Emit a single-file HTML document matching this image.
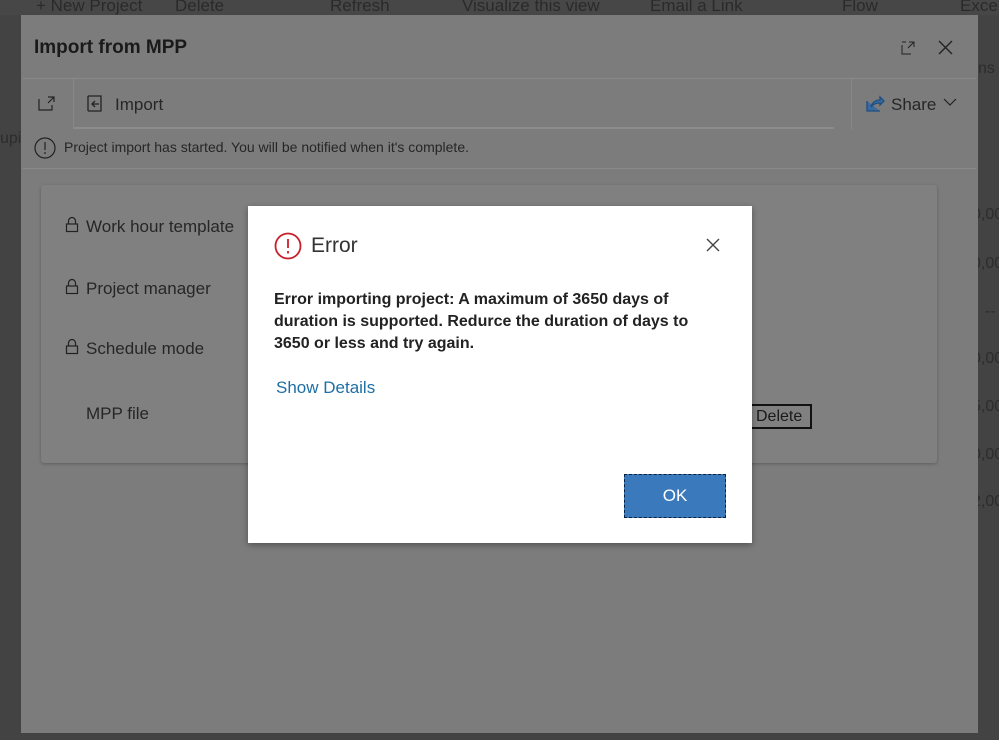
<!DOCTYPE html>
<html style="background:#434343"><head><meta charset="utf-8"><style>
*{margin:0;padding:0;box-sizing:border-box}
body{width:999px;height:740px;overflow:hidden;background:#434343;font-family:"Liberation Sans",sans-serif;position:relative;color:#1e1e1e}
.a{position:absolute}
.top{left:0;top:0;width:999px;height:15px;background:#474747;overflow:hidden}
.top span{position:absolute;top:-4px;font-size:17px;color:#2a2a2a}
.panel{left:21px;top:15px;width:957px;height:718px;background:#7c7c7c}
.t{font-size:19px;font-weight:bold;color:#1a1a1a}
.lbl{font-size:17px;color:#262626}
.num{font-size:16px;color:#2c2c2c;left:972px}
</style></head><body>
<div class="a top">
<span style="left:36px">+ New Project</span><span style="left:175px">Delete</span><span style="left:330px">Refresh</span><span style="left:462px">Visualize this view</span><span style="left:650px">Email a Link</span><span style="left:842px">Flow</span><span style="left:960px">Excel</span>
</div>
<div class="a" style="left:978px;top:60px;font-size:16px;color:#2c2c2c">ns</div>
<div class="a num" style="top:206px">0,00</div>
<div class="a num" style="top:255px">0,00</div>
<div class="a num" style="top:303px;left:985px">--</div>
<div class="a num" style="top:350px">0,00</div>
<div class="a num" style="top:398px">5,00</div>
<div class="a num" style="top:446px">0,00</div>
<div class="a num" style="top:493px">2,00</div>
<div class="a" style="left:0;top:130px;font-size:16px;color:#2c2c2c">upi</div>

<div class="a panel"></div>
<div class="a t" style="left:34px;top:37px">Import from MPP</div>
<svg class="a" style="left:900px;top:40px" width="16" height="16" viewBox="0 0 16 16" fill="none" stroke="#222" stroke-width="1"><path d="M2 5V14H11M9 2H14V7M14 2L8 8M2 2h4"/></svg>
<svg class="a" style="left:938px;top:40px" width="15" height="15" viewBox="0 0 15 15" stroke="#222" stroke-width="1.4"><path d="M1 1L14 14M14 1L1 14"/></svg>
<div class="a" style="left:23px;top:78px;width:953px;height:1px;background:#8a8a8a"></div>
<div class="a" style="left:73px;top:79px;width:1px;height:50px;background:#888"></div>
<div class="a" style="left:851px;top:79px;width:1px;height:50px;background:#888"></div>
<div class="a" style="left:74px;top:127px;width:760px;height:2px;background:#8c8c8c"></div>
<svg class="a" style="left:37px;top:95px" width="20" height="17" viewBox="0 0 20 17" fill="none" stroke="#222" stroke-width="1.2"><path d="M2 4V15H15V10M11 2H17V7M17 2L11 8"/></svg>
<svg class="a" style="left:86px;top:94px" width="18" height="20" viewBox="0 0 18 20" fill="none" stroke="#222" stroke-width="1.3"><path d="M2 2H15V17H2M2 2V17M13 10H6M9 7L6 10L9 13"/></svg>
<div class="a lbl" style="left:115px;top:95px">Import</div>
<svg class="a" style="left:865px;top:95px" width="20" height="18" viewBox="0 0 20 18" fill="none" stroke="#1f4f80" stroke-width="1.3"><path d="M2 6V16H15M6 12C7 7 11 5 15 5V2L19 6L15 10V8C11 8 8 9 6 12Z" fill="#3b6aa0"/></svg>
<div class="a lbl" style="left:891px;top:95px">Share</div>
<svg class="a" style="left:943px;top:98px" width="14" height="9" viewBox="0 0 14 9" fill="none" stroke="#222" stroke-width="1.2"><path d="M1 1L7 7L13 1"/></svg>
<div class="a" style="left:23px;top:168px;width:953px;height:1px;background:#8a8a8a"></div>
<svg class="a" style="left:34px;top:137px" width="22" height="22" viewBox="0 0 22 22" fill="none" stroke="#222" stroke-width="1.2"><circle cx="11" cy="11" r="10"/><path d="M11 5V13M11 15V17"/></svg>
<div class="a" style="left:64px;top:139px;font-size:14px;color:#262626">Project import has started. You will be notified when it's complete.</div>

<div class="a" style="left:41px;top:185px;width:896px;height:278px;background:#808080;border-radius:3px;box-shadow:0 1px 3px rgba(0,0,0,.25)"></div>
<svg class="a" style="left:65px;top:216px" width="14" height="17" viewBox="0 0 14 17" fill="none" stroke="#222" stroke-width="1.2"><rect x="1.5" y="8" width="11" height="7.5"/><path d="M3.5 8V5a3.5 3.5 0 0 1 7 0V8"/></svg>
<div class="a lbl" style="left:86px;top:217px">Work hour template</div>
<svg class="a" style="left:65px;top:278px" width="14" height="17" viewBox="0 0 14 17" fill="none" stroke="#222" stroke-width="1.2"><rect x="1.5" y="8" width="11" height="7.5"/><path d="M3.5 8V5a3.5 3.5 0 0 1 7 0V8"/></svg>
<div class="a lbl" style="left:86px;top:279px">Project manager</div>
<svg class="a" style="left:65px;top:338px" width="14" height="17" viewBox="0 0 14 17" fill="none" stroke="#222" stroke-width="1.2"><rect x="1.5" y="8" width="11" height="7.5"/><path d="M3.5 8V5a3.5 3.5 0 0 1 7 0V8"/></svg>
<div class="a lbl" style="left:86px;top:339px">Schedule mode</div>
<div class="a lbl" style="left:86px;top:404px">MPP file</div>
<div class="a" style="left:740px;top:404px;width:72px;height:25px;border:2px solid #111;font-size:16px;padding-left:14px;line-height:21px;color:#1a1a1a">Delete</div>

<div class="a" style="left:248px;top:206px;width:504px;height:337px;background:#fff;box-shadow:0 2px 6px rgba(0,0,0,.35)"></div>
<svg class="a" style="left:274px;top:232px" width="28" height="28" viewBox="0 0 28 28" fill="none" stroke="#c8202a" stroke-width="1.8"><circle cx="14" cy="14" r="12.5"/><path d="M14 7V16M14 19V21.5"/></svg>
<div class="a" style="left:311px;top:234px;font-size:21px;color:#333">Error</div>
<svg class="a" style="left:706px;top:238px" width="14" height="14" viewBox="0 0 14 14" stroke="#444" stroke-width="1.4"><path d="M1 1L13 13M13 1L1 13"/></svg>
<div class="a" style="left:274px;top:289px;width:440px;font-size:16px;font-weight:bold;line-height:22px;color:#222">Error importing project: A maximum of 3650 days of duration is supported. Redurce the duration of days to 3650 or less and try again.</div>
<div class="a" style="left:276px;top:378px;font-size:17px;color:#1e6fa5">Show Details</div>
<div class="a" style="left:624px;top:474px;width:102px;height:44px;background:#3b79bd;border:1.5px dashed #0a2040;color:#fff;font-size:17px;text-align:center;line-height:41px">OK</div>
</body></html>
